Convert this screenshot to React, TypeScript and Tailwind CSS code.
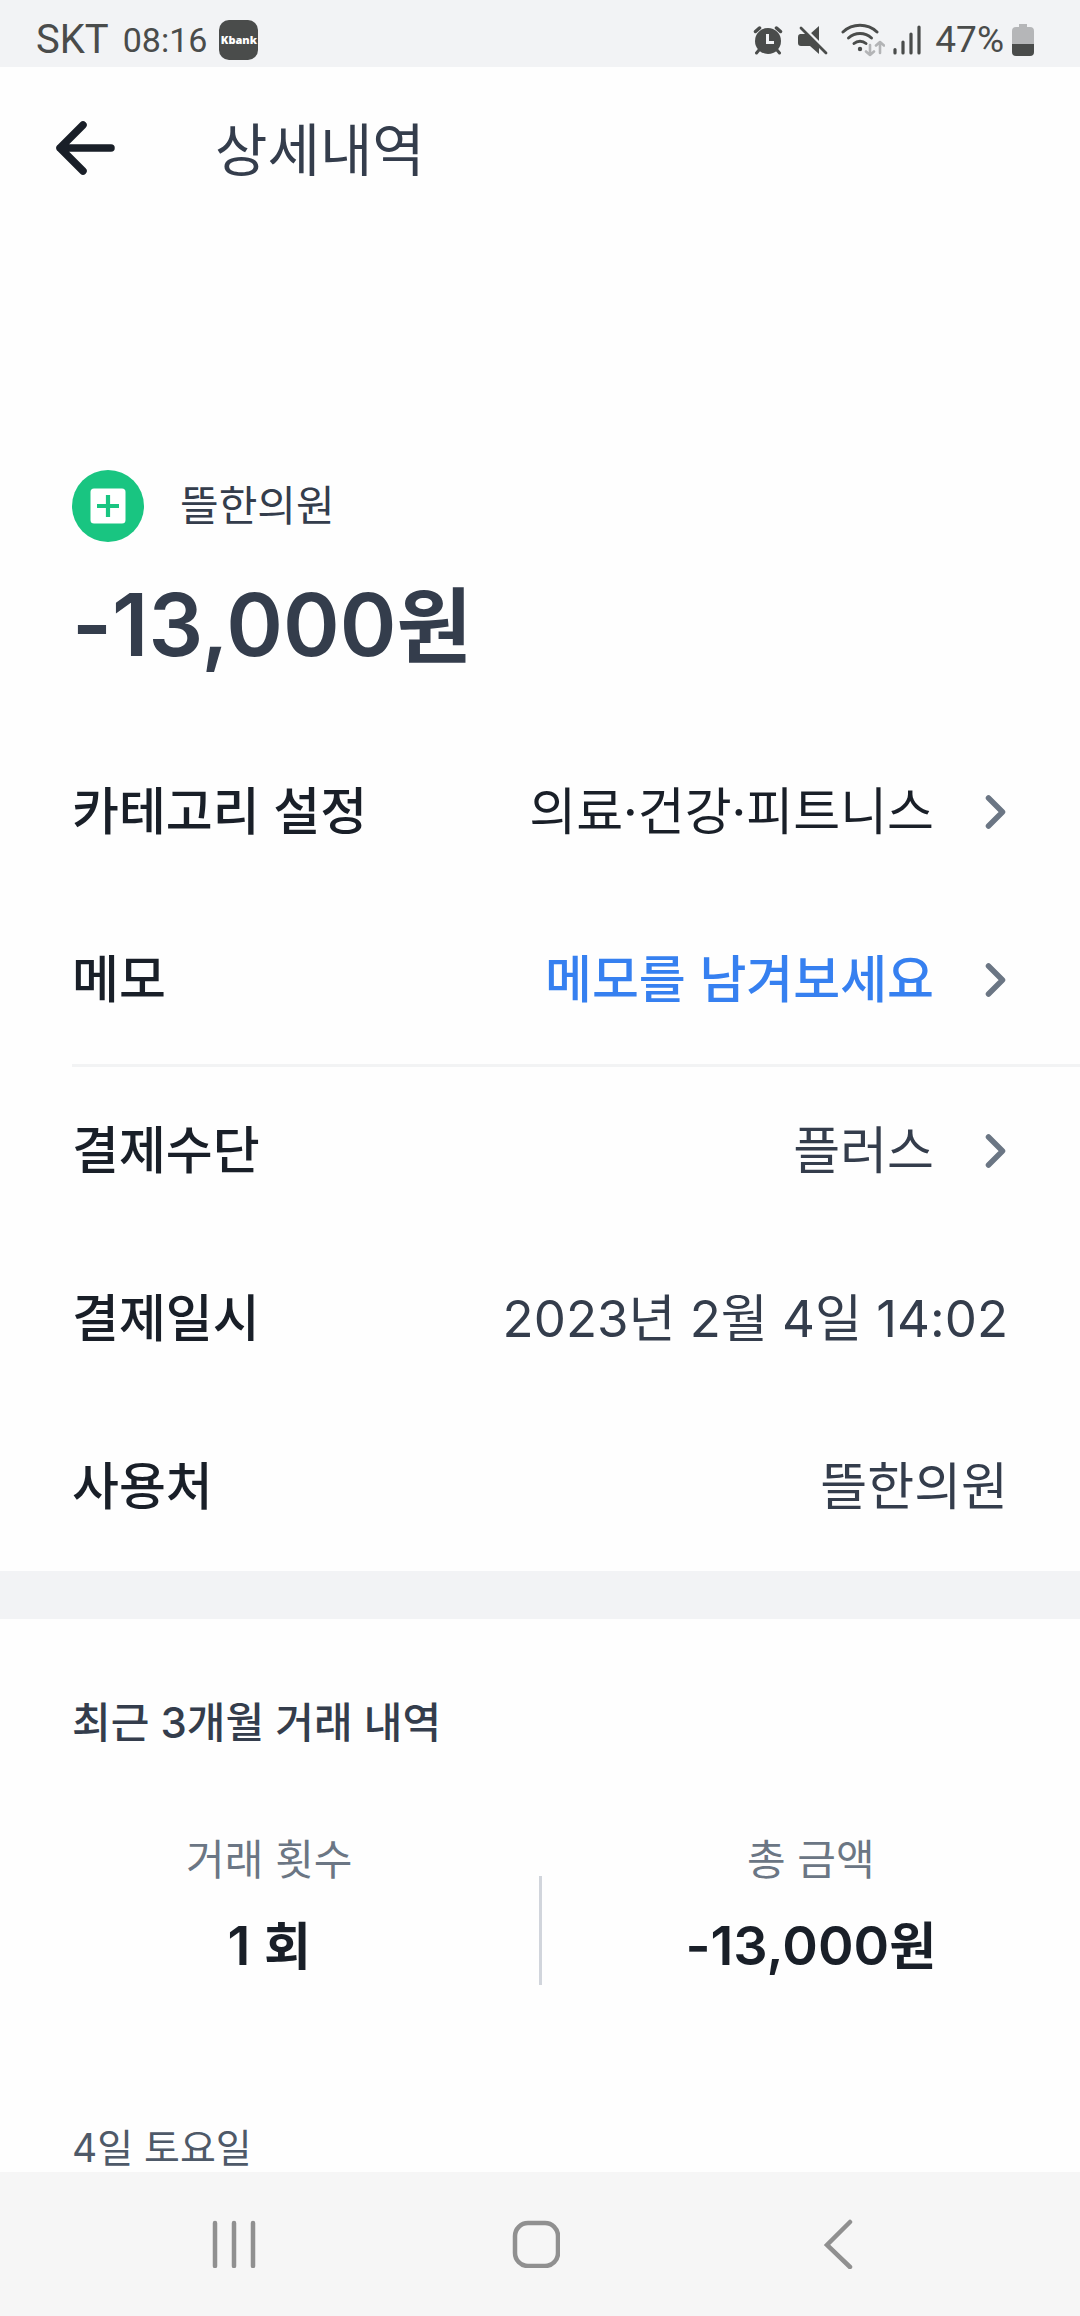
import type { ReactNode } from "react";

function StatusBar() {
  return (
    <div className="flex h-[67px] items-center justify-between bg-[#f2f3f5] pr-[46px] pl-9 font-['Roboto','Noto_Sans_CJK_KR',sans-serif] text-[#4a4c4b]">
      <div className="flex items-center pt-3">
        <span className="text-[40px] leading-none">SKT</span>
        <span className="ml-[14px] text-[34px] leading-none">08:16</span>
        <span className="ml-3 flex h-10 w-[39px] items-center justify-center rounded-[10px] bg-[#4a4c4b] font-['Open_Sans',sans-serif] text-[11px] leading-none font-extrabold text-white">
          Kbank
        </span>
      </div>
      <div className="flex items-center pt-3">
        <svg width="30" height="30" viewBox="0 0 30 30" fill="none" aria-hidden="true">
          <circle cx="15" cy="16" r="13" fill="#4a4c4b" />
          <path d="M2.500 6.500L6.500 3M27.500 6.500L23.500 3" stroke="#4a4c4b" strokeWidth="3.500" strokeLinecap="round" />
          <path d="M6 25l-2.500 3M24 25l2.500 3" stroke="#4a4c4b" strokeWidth="3" strokeLinecap="round" />
          <path d="M14.500 9v8.500h6.500" stroke="#f2f3f5" strokeWidth="3" />
        </svg>
        <svg className="ml-[14px]" width="32" height="32" viewBox="0 0 32 32" fill="none" aria-hidden="true">
          <path d="M3 10h7l12 12v8l-9-8H4a3 3 0 0 1-3-3v-6a3 3 0 0 1 2-3z" fill="#4a4c4b" />
          <path d="M13 10l9-8v17z" fill="#4a4c4b" />
          <path d="M5 2l25 25" stroke="#f2f3f5" strokeWidth="3" />
          <path d="M4 4l25 25" stroke="#4a4c4b" strokeWidth="2.800" strokeLinecap="round" />
        </svg>
        <svg className="ml-3" width="44" height="34" viewBox="0 0 44 34" fill="none" aria-hidden="true">
          <g stroke="#4a4c4b" strokeWidth="3" strokeLinecap="round">
            <path d="M2 9a25 25 0 0 1 34 0" />
            <path d="M7.500 15a17 17 0 0 1 23 0" />
            <path d="M13 20.500a9 9 0 0 1 12 0" />
          </g>
          <circle cx="19" cy="26" r="2.200" fill="#4a4c4b" />
          <path d="M29 22v10M25 28.500l4 3.500l4-3.500M39 30V19M35 22.500l4-3.500l4 3.500" stroke="#b3b4b6" strokeWidth="2.600" strokeLinecap="round" strokeLinejoin="round" />
        </svg>
        <svg className="ml-2" width="28" height="30" viewBox="0 0 28 30" aria-hidden="true">
          <path d="M2 24.500v3.500M10 17v11M18 9v19M26 2v26" stroke="#4a4c4b" strokeWidth="3.200" strokeLinecap="round" />
        </svg>
        <span className="ml-[14px] text-[37px] leading-none">47%</span>
        <svg className="ml-2" width="22" height="34" viewBox="0 0 22 34" aria-hidden="true">
          <path d="M7 1h8v3h3a4 4 0 0 1 4 4v13H0V8a4 4 0 0 1 4-4h3z" fill="#b5b6b8" />
          <path d="M0 21h22v8a4 4 0 0 1-4 4H4a4 4 0 0 1-4-4z" fill="#4a4c4b" />
        </svg>
      </div>
    </div>
  );
}

function Header() {
  return (
    <header className="flex h-[168px] items-center pl-[55px]">
      <button type="button" aria-label="뒤로" className="flex h-[60px] w-[60px] items-center justify-center">
        <svg width="60" height="60" viewBox="0 0 60 60" fill="none" aria-hidden="true">
          <path d="M56 27H5M28 4L5 27l23 23" stroke="#191f28" strokeWidth="7.500" strokeLinecap="round" strokeLinejoin="round" />
        </svg>
      </button>
      <h1 className="ml-[100px] text-[57px] leading-[72px] font-normal text-[#343d4c]">상세내역</h1>
    </header>
  );
}

function Chevron() {
  return (
    <svg className="ml-12 shrink-0" width="26" height="40" viewBox="0 0 26 40" fill="none" aria-hidden="true">
      <path d="M6.500 6L20.500 20L6.500 34" stroke="#6b7684" strokeWidth="5.500" strokeLinecap="round" strokeLinejoin="round" />
    </svg>
  );
}

function Row({ label, children, link = false, tone = "text-[#343d4c]" }: { label: string; children: ReactNode; link?: boolean; tone?: string }) {
  const body = (
    <>
      <span className="font-medium text-[#191f28]">{label}</span>
      <span className="flex items-center">
        <span className={tone}>{children}</span>
        {link && <Chevron />}
      </span>
    </>
  );
  const box = "flex h-[168px] w-full items-center justify-between px-[72px] text-left text-[51px] leading-[72px]";
  return link ? (
    <button type="button" className={box}>
      {body}
    </button>
  ) : (
    <div className={box}>{body}</div>
  );
}

function Stat({ label, children }: { label: string; children: ReactNode }) {
  return (
    <div className="flex flex-1 flex-col items-center pb-[3px]">
      <span className="text-[42px] leading-[60px] text-[#6b7684]">{label}</span>
      <span className="mt-5 text-[54px] leading-[72px] font-semibold text-[#191f28]">{children}</span>
    </div>
  );
}

function NavBar() {
  return (
    <nav className="flex h-36 items-center justify-between bg-[#f6f6f6] pr-[206px] pl-[198px]">
      <button type="button" aria-label="최근 앱" className="flex h-[72px] w-[72px] items-center justify-center">
        <svg width="48" height="48" viewBox="0 0 48 48" aria-hidden="true">
          <path d="M5 3v43M24 3v43M43 3v43" stroke="#909090" strokeWidth="4.500" strokeLinecap="round" />
        </svg>
      </button>
      <button type="button" aria-label="홈" className="flex h-[72px] w-[72px] items-center justify-center">
        <svg width="48" height="48" viewBox="0 0 48 48" fill="none" aria-hidden="true">
          <rect x="3" y="3" width="43" height="43" rx="13" stroke="#909090" strokeWidth="4.500" />
        </svg>
      </button>
      <button type="button" aria-label="이전" className="flex h-[72px] w-[72px] items-center justify-center">
        <svg width="32" height="50" viewBox="0 0 32 50" fill="none" aria-hidden="true">
          <path d="M28 3L5 26l23 22" stroke="#909090" strokeWidth="4.500" strokeLinecap="round" strokeLinejoin="miter" />
        </svg>
      </button>
    </nav>
  );
}

export default function App() {
  return (
    <div className="flex min-h-screen flex-col bg-[#fefefe] font-['Inter','Noto_Sans_CJK_KR',sans-serif]">
      <StatusBar />
      <Header />
      <main className="flex-1">
        <section className="px-[72px] pt-[235px]">
          <div className="flex items-center gap-9">
            <svg className="shrink-0" width="72" height="72" viewBox="0 0 72 72" fill="none" aria-hidden="true">
              <circle cx="36" cy="36" r="36" fill="#19c581" />
              <rect x="18.500" y="18.500" width="35" height="35" rx="3.500" fill="#ffffff" />
              <path d="M36 25v22M25 36h22" stroke="#19c581" strokeWidth="4.200" />
            </svg>
            <span className="text-[42px] leading-[60px] text-[#343d4c]">뜰한의원</span>
          </div>
          <p className="mt-[23px] text-[86px] leading-[120px] font-semibold text-[#343d4c]">
            -13,000<span className="text-[82px] leading-none font-bold">원</span>
          </p>
        </section>

        <section className="mt-[43px]">
          <Row label="카테고리 설정" link tone="text-[#191f28]">
            의료·건강·피트니스
          </Row>
          <Row label="메모" link tone="font-medium text-[#3680f0]">
            메모를 남겨보세요
          </Row>
          <div className="ml-[72px] h-[3px] bg-[#f2f3f4]" />
          <Row label="결제수단" link>
            플러스
          </Row>
          <Row label="결제일시">2023년 2월 4일 14:02</Row>
          <Row label="사용처">뜰한의원</Row>
        </section>

        <div className="h-12 bg-[#f2f3f5]" />

        <section className="pt-[74px]">
          <h2 className="px-[72px] text-[42px] leading-[60px] font-medium text-[#343d4c]">최근 3개월 거래 내역</h2>
          <div className="mt-[77px] flex items-end">
            <Stat label="거래 횟수">
              1 <span className="text-[51px] leading-none font-bold">회</span>
            </Stat>
            <div className="h-[109px] w-[3px] bg-[#d1d5dc]" />
            <Stat label="총 금액">
              -13,000<span className="text-[51px] leading-none font-bold">원</span>
            </Stat>
          </div>
          <h3 className="mt-[139px] px-[72px] text-[39px] leading-[48px] font-normal text-[#4e5968]">4일 토요일</h3>
        </section>
      </main>
      <NavBar />
    </div>
  );
}
